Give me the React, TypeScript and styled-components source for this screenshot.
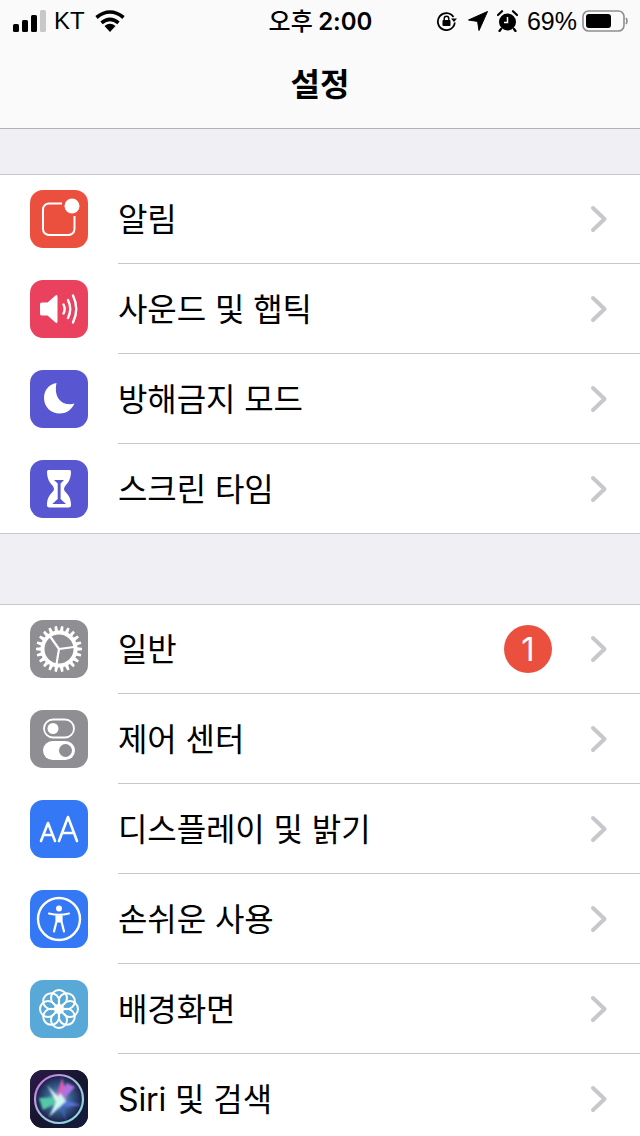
import React from "react";
import styled, { createGlobalStyle } from "styled-components";

const GlobalStyle = createGlobalStyle`
  html, body {
    margin: 0;
    padding: 0;
    background: #efeff4;
  }
  body {
    font-family: "Liberation Sans", "Noto Sans CJK KR", sans-serif;
    color: #000;
  }
`;

const Page = styled.div`
  width: 640px;
  height: 1136px;
  overflow: hidden;
  background: #efeff4;
`;

const Header = styled.header`
  height: 128px;
  background: #fafafa;
  border-bottom: 1px solid #b2b2b2;
`;

const StatusBar = styled.div`
  height: 40px;
  display: grid;
  grid-template-columns: 1fr auto 1fr;
  align-items: center;
  padding: 0 12px 0 13px;
`;

const StatusLeft = styled.div`
  display: flex;
  align-items: center;
`;

const StatusRight = styled.div`
  display: flex;
  align-items: center;
  justify-content: flex-end;
`;

const StatusText = styled.span`
  font-size: ${(p) => p.$size}px;
  line-height: 40px;
  margin: 0 ${(p) => p.$right ?? 0}px 0 ${(p) => p.$left ?? 0}px;
`;

const Clock = styled.span`
  font-size: 24px;
  font-weight: 500;
  line-height: 40px;
  font-family: "Noto Sans CJK KR", sans-serif;
`;

const ClockDigits = styled.span`
  font-family: "Inter", sans-serif;
  font-weight: 600;
  font-size: 24px;
`;

const NavTitle = styled.h1`
  margin: 0;
  height: 88px;
  line-height: 84px;
  text-align: center;
  font-size: 32px;
  font-weight: 700;
  font-family: "Noto Sans CJK KR", sans-serif;
`;

const Glyph = styled.svg`
  display: block;
  flex: none;
  margin-left: ${(p) => p.$left ?? 0}px;
`;

const Group = styled.section`
  margin-top: ${(p) => p.$top}px;
  background: #fff;
  box-shadow: inset 0 1px 0 #c8c7cc;
`;

const Row = styled.div`
  box-sizing: border-box;
  height: 90px;
  display: flex;
  align-items: stretch;
  padding-left: 30px;
  &:last-child {
    border-bottom: 1px solid #c8c7cc;
  }
`;

const IconBox = styled.div`
  width: 58px;
  height: 58px;
  flex: none;
  margin: 16px 30px 0 0;
  border-radius: 13px;
  overflow: hidden;
  background: ${(p) => p.$bg};
  svg {
    display: block;
  }
`;

const RowBody = styled.div`
  flex: 1;
  display: flex;
  align-items: center;
  padding-right: 32px;
  border-bottom: ${(p) => (p.$last ? "0" : "1px solid #c8c7cc")};
`;

const RowLabel = styled.span`
  flex: 1;
  padding-top: 2px;
  font-size: 32px;
  letter-spacing: -0.1px;
  line-height: 86px;
  font-family: "Inter", "Noto Sans CJK KR", sans-serif;
`;

const Badge = styled.span`
  width: 48px;
  height: 48px;
  margin-right: 38px;
  border-radius: 50%;
  background: #eb503e;
  color: #fff;
  font-family: "Inter", sans-serif;
  font-size: 33px;
  line-height: 48px;
  text-align: center;
`;

const W = "#fff";

const Chevron = () => (
  <Glyph width="18" height="28" viewBox="0 0 18 28">
    <path d="M3 3 L14.5 14 L3 25" fill="none" stroke="#c7c7cc" strokeWidth="4" strokeLinecap="round" strokeLinejoin="round" />
  </Glyph>
);

const Icon = ({ children }: { children: React.ReactNode }) => (
  <svg width="58" height="58" viewBox="0 0 58 58">{children}</svg>
);

const gearPath = (() => {
  const pts: string[] = [];
  const teeth = 22;
  for (let i = 0; i < teeth; i++) {
    const a = (i / teeth) * Math.PI * 2;
    const s = (Math.PI * 2) / teeth;
    const p = (r: number, o: number) =>
      `${(29 + r * Math.cos(a + o)).toFixed(2)} ${(29 + r * Math.sin(a + o)).toFixed(2)}`;
    pts.push(`${i ? "L" : "M"}${p(18.5, -s * 0.32)}`, `L${p(23, -s * 0.18)}`, `L${p(23, s * 0.18)}`, `L${p(18.5, s * 0.32)}`);
  }
  return pts.join(" ") + " Z";
})();

const icons = {
  bell: (
    <Icon>
      <path d="M32 13.5 H19 A6 6 0 0 0 13 19.5 V39 A6 6 0 0 0 19 45 H38.5 A6 6 0 0 0 44.5 39 V26" fill="none" stroke={W} strokeWidth="2" />
      <circle cx="42" cy="16" r="7.5" fill={W} />
    </Icon>
  ),
  sound: (
    <Icon>
      <path d="M10 24 Q10 22.5 12 22.5 H17.5 L25.5 15.5 Q27.5 14 27.5 17 V41 Q27.5 44 25.5 42.5 L17.5 35.5 H12 Q10 35.5 10 34 Z" fill={W} />
      <g fill="none" stroke={W} strokeWidth="2.4" strokeLinecap="round">
        <path d="M33.5 24.5 Q35.8 29 33.5 33.5" />
        <path d="M38 20 Q42.5 29 38 38" />
        <path d="M43 15.5 Q49.5 29 43 42.5" />
      </g>
    </Icon>
  ),
  moon: (
    <Icon>
      <path d="M26.5 13 C18 14.5 14 21 14 28 C14 37 21 43.5 29.5 43.5 C36 43.5 41 40.5 44.5 33.5 C34.5 36.5 23 30 26.5 13 Z" fill={W} />
    </Icon>
  ),
  hourglass: (
    <Icon>
      <path d="M18.5 10 H39.5 Q41 10 41 11.5 C41 19 38 23 35.5 25.5 Q34 27.5 34 29 Q34 30.5 36 32.5 C39 35.5 41 39 41 45 Q41 47.5 38.5 47.5 H19.5 Q17 47.5 17 45 C17 39 19 35.5 22 32.5 Q24 30.5 24 29 Q24 27.5 22.5 25.5 C20 23 17 19 17 11.5 Q17 10 18.5 10 Z" fill={W} />
      <path d="M24 20 H34 L30.6 23.5 V39 L36 44 H22.3 L27.7 39 V23.5 Z" fill="#5856d0" />
    </Icon>
  ),
  gear: (
    <Icon>
      <path d={gearPath} fill={W} />
      <circle cx="29" cy="29" r="14.5" fill="#8e8e93" />
      <path d="M29 29 L44 27 M29 29 L20.5 17 M29 29 L26.5 44" stroke={W} strokeWidth="2.2" />
    </Icon>
  ),
  toggles: (
    <Icon>
      <rect x="14" y="9.5" width="30" height="18" rx="9" fill="none" stroke={W} strokeWidth="1.8" />
      <circle cx="23" cy="18.5" r="5.5" fill={W} />
      <rect x="13" y="31" width="32" height="19" rx="9.5" fill={W} />
      <circle cx="35.5" cy="40.5" r="6.5" fill="#8e8e93" />
    </Icon>
  ),
  text: (
    <Icon>
      <g fill="none" stroke={W} strokeWidth="2.6" strokeLinecap="round" strokeLinejoin="round">
        <path d="M11 41 L18 23 L25 41 M13.5 35 H22.5" />
        <path d="M29 41 L38 17 L47 41 M32 33 H44" />
      </g>
    </Icon>
  ),
  access: (
    <Icon>
      <circle cx="29" cy="29" r="21" fill="none" stroke={W} strokeWidth="2.4" />
      <circle cx="29" cy="18.5" r="3" fill={W} />
      <path d="M19 23.5 Q29 26 39 23.5 M26.5 25.5 L26.5 31.5 L24 41.5 M31.5 25.5 L31.5 31.5 L34 41.5 M26.5 31 H31.5" fill="none" stroke={W} strokeWidth="2.2" strokeLinecap="round" strokeLinejoin="round" />
      <rect x="26.5" y="25.5" width="5" height="7" fill={W} />
    </Icon>
  ),
  flower: (
    <Icon>
      <g fill="none" stroke={W} strokeWidth="2">
        {[0, 45, 90, 135, 180, 225, 270, 315].map((a) => (
          <circle key={a} cx="29" cy="18" r="8" transform={`rotate(${a} 29 29)`} />
        ))}
      </g>
      <circle cx="29" cy="29" r="3.6" fill={W} />
    </Icon>
  ),
  siri: (
    <Icon>
      <defs>
        <linearGradient id="siriBg" x1="0" y1="0" x2="1" y2="1">
          <stop offset="0" stopColor="#2c1a4a" />
          <stop offset="0.5" stopColor="#16162e" />
          <stop offset="1" stopColor="#141c3c" />
        </linearGradient>
        <radialGradient id="siriOrb" cx="0.5" cy="0.5" r="0.5">
          <stop offset="0" stopColor="#6fb8c8" />
          <stop offset="0.5" stopColor="#35608e" />
          <stop offset="1" stopColor="#1c1c44" />
        </radialGradient>
        <linearGradient id="siriRing" x1="0" y1="0" x2="1" y2="1">
          <stop offset="0" stopColor="#d06ae0" />
          <stop offset="0.5" stopColor="#a8c0dc" />
          <stop offset="1" stopColor="#80e0e0" />
        </linearGradient>
        <filter id="siriSoft">
          <feGaussianBlur stdDeviation="0.9" />
        </filter>
      </defs>
      <rect width="58" height="58" fill="url(#siriBg)" />
      <circle cx="29" cy="29" r="24" fill="url(#siriOrb)" stroke="url(#siriRing)" strokeWidth="2.2" />
      <g filter="url(#siriSoft)">
        <path d="M32 8 L37 26 L33 30 L26 28 Z" fill="#e05cb0" />
        <path d="M9 28 L27 27 L30 31 L13 40 Z" fill="#55c8a8" />
        <path d="M45 17 L32 31 L28 27 L37 13 Z" fill="#b070e0" />
        <path d="M31 29 L51 35 L36 37 Z" fill="#5c70e0" />
        <path d="M27 31 L33 31 L36 51 Z" fill="#4060c8" />
        <path d="M17 15 L33 32 L27 33 Z" fill="#e8f4f8" />
        <path d="M30 23 L36 31 L19 47 Z" fill="#d0f6f2" />
      </g>
    </Icon>
  ),
};

const groups = [
  {
    top: 45,
    rows: [
      { label: "알림", bg: "#eb503e", icon: icons.bell },
      { label: "사운드 및 햅틱", bg: "#ea425e", icon: icons.sound },
      { label: "방해금지 모드", bg: "#5856d0", icon: icons.moon },
      { label: "스크린 타임", bg: "#5856d0", icon: icons.hourglass },
    ],
  },
  {
    top: 70,
    rows: [
      { label: "일반", bg: "#8e8e93", icon: icons.gear, badge: "1" },
      { label: "제어 센터", bg: "#8e8e93", icon: icons.toggles },
      { label: "디스플레이 및 밝기", bg: "#3478f6", icon: icons.text },
      { label: "손쉬운 사용", bg: "#3478f6", icon: icons.access },
      { label: "배경화면", bg: "#58a9d8", icon: icons.flower },
      { label: "Siri 및 검색", bg: "#1a1a30", icon: icons.siri },
    ],
  },
];

const App = () => (
  <Page>
    <GlobalStyle />
    <Header>
      <StatusBar>
        <StatusLeft>
          <Glyph width="33" height="22" viewBox="0 0 33 22">
            <rect x="0" y="14" width="6" height="8" rx="1.5" fill="#000" />
            <rect x="9" y="10" width="6" height="12" rx="1.5" fill="#000" />
            <rect x="18" y="5" width="6" height="17" rx="1.5" fill="#000" />
            <rect x="27" y="0" width="6" height="22" rx="1.5" fill="#c8c8c8" />
          </Glyph>
          <StatusText $size={24} $left={8} $right={10}>KT</StatusText>
          <Glyph width="30" height="22" viewBox="0 0 30 22">
            <path d="M15 22 L9.5 16 Q15 11.5 20.5 16 Z" fill="#000" />
            <path d="M6.5 12.8 Q15 5.8 23.5 12.8" fill="none" stroke="#000" strokeWidth="3.6" />
            <path d="M1.5 7.5 Q15 -3.5 28.5 7.5" fill="none" stroke="#000" strokeWidth="3.6" />
          </Glyph>
        </StatusLeft>
        <Clock>오후 <ClockDigits>2:00</ClockDigits></Clock>
        <StatusRight>
          <Glyph width="21" height="20" viewBox="0 0 21 20">
            <path d="M17.5 6 A8.5 8.5 0 1 0 18.8 11.5" fill="none" stroke="#000" strokeWidth="1.8" />
            <path d="M15 7.5 H21 L18 11 Z" fill="#000" />
            <rect x="6.5" y="9" width="8" height="6" rx="1" fill="#000" />
            <path d="M8.2 9 V7.5 A2.3 2.3 0 0 1 12.8 7.5 V9" fill="none" stroke="#000" strokeWidth="1.4" />
          </Glyph>
          <Glyph $left={11} width="20" height="20" viewBox="0 0 20 20">
            <path d="M19.5 0.5 L11 19.5 L9.6 10.4 L0.5 9 Z" fill="#000" stroke="#000" strokeLinejoin="round" />
          </Glyph>
          <Glyph $left={9} width="21" height="22" viewBox="0 0 21 22">
            <circle cx="10.5" cy="12" r="8.5" fill="#000" />
            <path d="M10.5 7 V12.5 H7" fill="none" stroke="#fff" strokeWidth="1.5" />
            <path d="M1 5 L5 1.2 M20 5 L16 1.2 M4 19 L2.5 21 M17 19 L18.5 21" stroke="#000" strokeWidth="2.2" strokeLinecap="round" />
          </Glyph>
          <StatusText $size={25} $left={9} $right={5}>69%</StatusText>
          <Glyph width="46" height="22" viewBox="0 0 46 22">
            <rect x="1" y="1" width="41" height="20" rx="5.5" fill="none" stroke="#8e8e8e" strokeWidth="1.6" />
            <rect x="4" y="4" width="25" height="14" rx="3" fill="#000" />
            <path d="M44 8 Q46 11 44 14" fill="none" stroke="#8e8e8e" strokeWidth="1.6" />
          </Glyph>
        </StatusRight>
      </StatusBar>
      <NavTitle>설정</NavTitle>
    </Header>
    {groups.map((group) => (
      <Group key={group.top} $top={group.top}>
        {group.rows.map((row, i) => (
          <Row key={row.label}>
            <IconBox $bg={row.bg}>{row.icon}</IconBox>
            <RowBody $last={i === group.rows.length - 1}>
              <RowLabel>{row.label}</RowLabel>
              {row.badge && <Badge>{row.badge}</Badge>}
              <Chevron />
            </RowBody>
          </Row>
        ))}
      </Group>
    ))}
  </Page>
);

export default App;
